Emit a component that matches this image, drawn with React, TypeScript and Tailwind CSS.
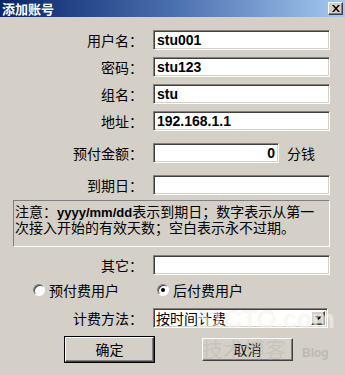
import React from "react";

// Win2000-style dialog: "添加账号"
const cjk = { fontFamily: '"Noto Sans CJK SC", "DejaVu Sans", sans-serif' };
const latin = { fontFamily: '"Liberation Sans", "Noto Sans CJK SC", sans-serif' };

const sunken =
  "bg-white border border-t-[#808080] border-l-[#808080] border-b-white border-r-white shadow-[inset_1px_1px_0_#404040,inset_-1px_-1px_0_#d4d0c8]";
const raised =
  "bg-[#d4d0c8] border border-t-white border-l-white border-b-[#404040] border-r-[#404040] shadow-[inset_-1px_-1px_0_#808080]";

function Label({ text }: { text: string }) {
  return (
    <div className="w-[143px] shrink-0 text-right text-[14px] leading-none text-black" style={cjk}>
      {text}
    </div>
  );
}

function Field({ value, right, w = "w-[177px]" }: { value?: string; right?: boolean; w?: string }) {
  return (
    <div
      className={`${sunken} ${w} h-full flex items-center px-[3px] ${right ? "justify-end" : ""}`}
    >
      <span className="text-[14px] font-bold text-black leading-none" style={latin}>
        {value}
      </span>
    </div>
  );
}

function Row({ label, children, top, h = "h-[20px]" }: { label: string; children: React.ReactNode; top: string; h?: string }) {
  return (
    <div className={`flex items-center ${top} ${h}`}>
      <Label text={label} />
      <div className="ml-[10px] h-full flex items-center">{children}</div>
    </div>
  );
}

function Radio({ checked }: { checked?: boolean }) {
  return (
    <span className="w-[12px] h-[12px] rounded-full bg-white border border-t-[#808080] border-l-[#808080] border-b-white border-r-white flex items-center justify-center shadow-[inset_1px_1px_0_#404040]">
      {checked && <span className="w-[4px] h-[4px] rounded-full bg-black" />}
    </span>
  );
}

export default function App() {
  return (
    <div className="w-[345px] h-[375px] bg-[#d4d0c8] relative overflow-hidden select-none">
      {/* Title bar */}
      <div className="h-[17px] flex items-center justify-between bg-gradient-to-r from-[#0a246a] via-[#4a6fae] to-[#a6caf0] pl-[2px] pr-[2px]">
        <span className="text-white font-bold text-[13px] leading-none" style={cjk}>
          添加账号
        </span>
        <span className={`${raised} w-[15px] h-[13px] flex items-center justify-center`}>
          <svg width="8" height="7" viewBox="0 0 8 7">
            <path d="M0 0h2l2 2.5L6 0h2L5 3.5 8 7H6L4 4.5 2 7H0l3-3.5z" fill="#000" />
          </svg>
        </span>
      </div>

      <div className="flex flex-col">
        <Row label="用户名：" top="mt-[13px]">
          <Field value="stu001" />
        </Row>
        <Row label="密码：" top="mt-[7px]">
          <Field value="stu123" />
        </Row>
        <Row label="组名：" top="mt-[7px]">
          <Field value="stu" />
        </Row>
        <Row label="地址：" top="mt-[7px]">
          <Field value="192.168.1.1" />
        </Row>
        <Row label="预付金额：" top="mt-[12px]">
          <Field value="0" right w="w-[126px]" />
          <span className="ml-[8px] text-[14px] leading-none text-black" style={cjk}>
            分钱
          </span>
        </Row>
        <Row label="到期日：" top="mt-[12px]">
          <Field />
        </Row>

        {/* Note */}
        <div
          className="mt-[5px] ml-[13px] w-[317px] h-[47px] border border-t-[#808080] border-l-[#808080] border-b-white border-r-white px-[1px] pt-[3px] text-[14px] leading-[14px] text-black whitespace-nowrap"
          style={cjk}
        >
          <div className="flex items-baseline">
            <span>注意：</span>
            <b style={latin} className="text-[13px]">yyyy/mm/dd</b>
            <span>表示到期日；数字表示从第一</span>
          </div>
          <div>次接入开始的有效天数；空白表示永不过期。</div>
        </div>

        <Row label="其它：" top="mt-[8px]">
          <Field />
        </Row>

        {/* Radios */}
        <div className="mt-[7px] h-[15px] flex items-center text-[14px] leading-none text-black" style={cjk}>
          <div className="ml-[33px] flex items-center gap-[4px]">
            <Radio />
            <span>预付费用户</span>
          </div>
          <div className="ml-[38px] flex items-center gap-[4px]">
            <Radio checked />
            <span>后付费用户</span>
          </div>
        </div>

        <Row label="计费方法：" top="mt-[11px]">
          <div className={`${sunken} w-[175px] h-full flex items-center justify-between pl-[2px] pr-[2px]`}>
            <span className="text-[14px] leading-none text-black" style={cjk}>
              按时间计费
            </span>
            <span className={`${raised} w-[14px] h-[14px] flex items-center justify-center`}>
              <svg width="7" height="4" viewBox="0 0 7 4">
                <path d="M0 0h7L3.5 4z" fill="#000" />
              </svg>
            </span>
          </div>
        </Row>

        {/* Buttons */}
        <div className="mt-[8px] flex items-center">
          <button className="ml-[64px] w-[91px] h-[27px] border border-black p-0 bg-[#d4d0c8]">
            <span className={`${raised} w-full h-full flex items-center justify-center text-[14px] text-black`} style={cjk}>
              确定
            </span>
          </button>
          <button
            className={`${raised} ml-[47px] w-[91px] h-[23px] flex items-center justify-center text-[14px] text-black`}
            style={cjk}
          >
            取消
          </button>
        </div>
      </div>

      {/* watermark */}
      <div className="absolute left-[196px] top-[306px] pointer-events-none text-[#f4f2ee] opacity-60">
        <div className="text-[26px] font-bold leading-none tracking-tight" style={latin}>
          51CTO.com
        </div>
      </div>
      <div className="absolute left-[202px] top-[338px] pointer-events-none flex items-end gap-[16px] opacity-50">
        <span className="text-[21px] leading-none text-[#bdb9b0]" style={cjk}>技术博客</span>
        <span className="text-[12px] font-bold leading-none text-[#a9a59c]" style={latin}>Blog</span>
      </div>
    </div>
  );
}
